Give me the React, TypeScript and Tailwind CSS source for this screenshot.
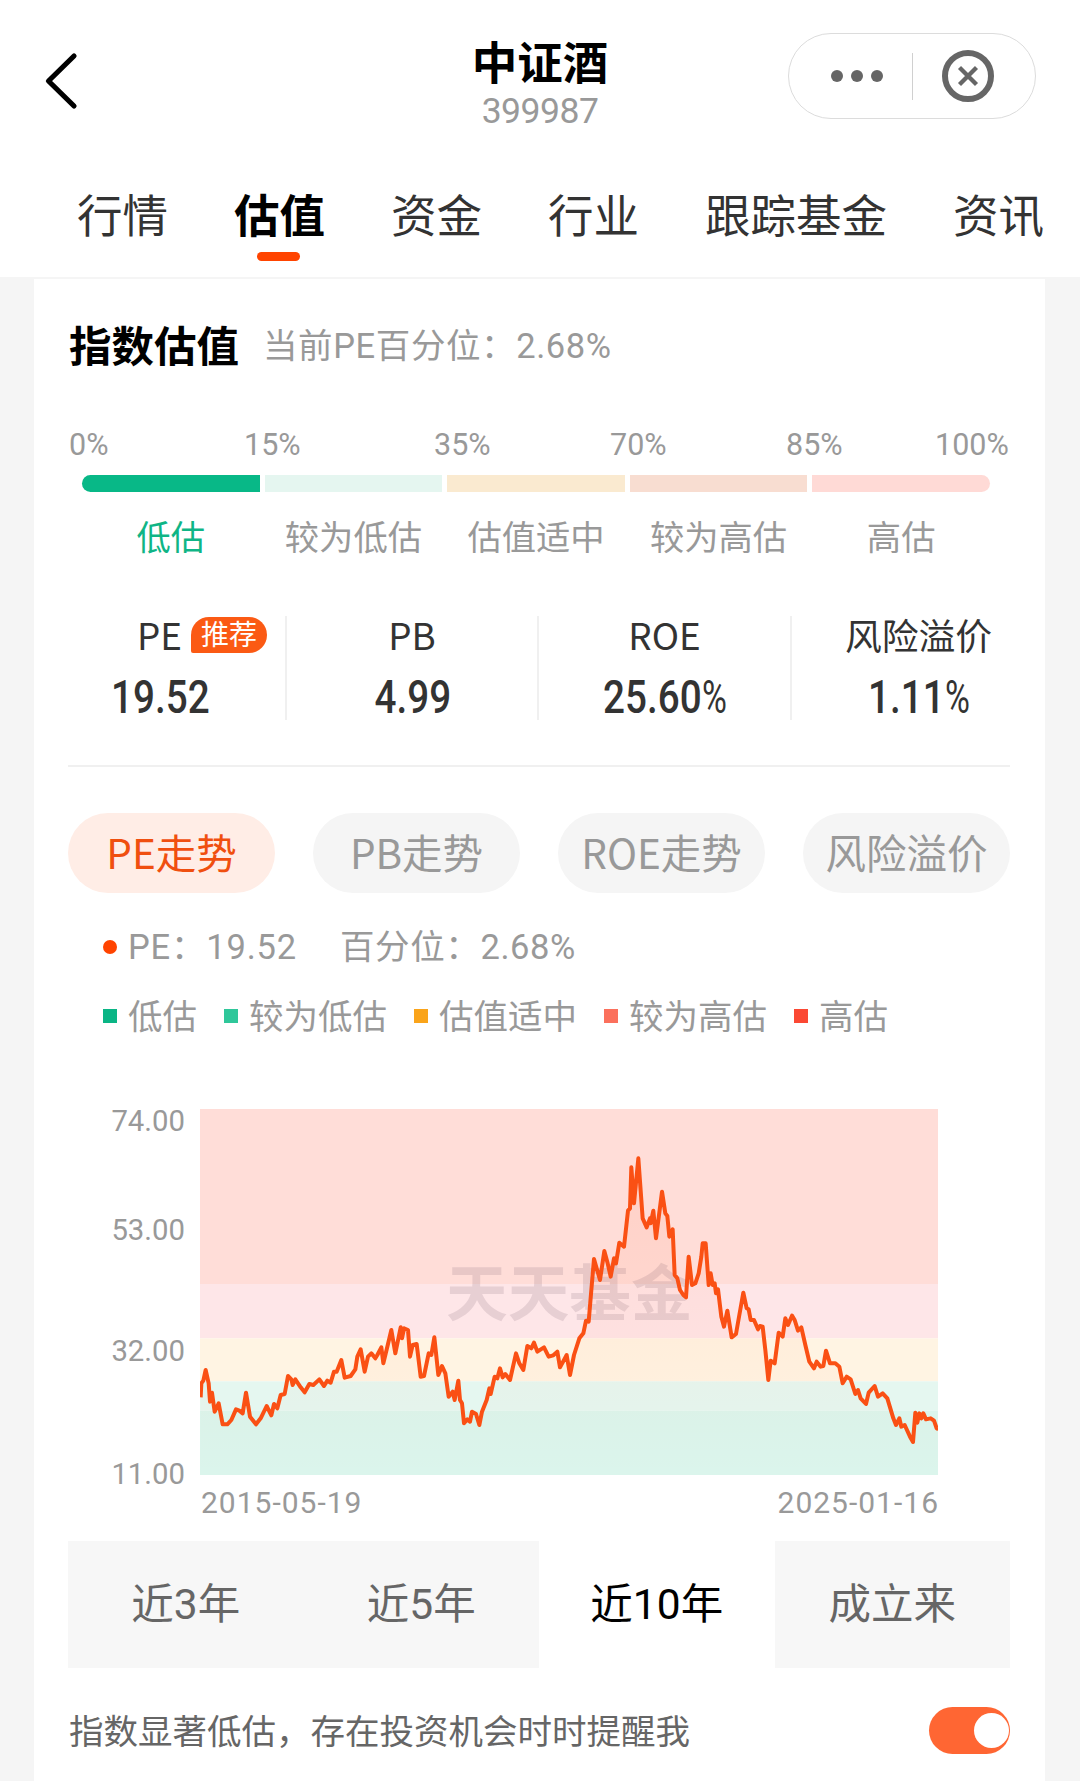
import React from "react";

const tabs = ["行情", "估值", "资金", "行业", "跟踪基金", "资讯"];

const levels = [
  { name: "低估", bar: "bg-[#08b887]", dot: "bg-[#0ab585]" },
  { name: "较为低估", bar: "bg-[#e5f6f0]", dot: "bg-[#2fc79a]" },
  { name: "估值适中", bar: "bg-[#faead0]", dot: "bg-[#faa41a]" },
  { name: "较为高估", bar: "bg-[#f8ddd1]", dot: "bg-[#fb705c]" },
  { name: "高估", bar: "bg-[#ffdad6]", dot: "bg-[#fb4833]" },
];

const metrics = [
  { name: "PE", value: "19.52", recommended: true },
  { name: "PB", value: "4.99" },
  { name: "ROE", value: "25.60", percent: true },
  { name: "风险溢价", value: "1.11", percent: true },
];

const trends = ["PE走势", "PB走势", "ROE走势", "风险溢价"];
const ranges = ["近3年", "近5年", "近10年", "成立来"];

const line =
  "332,922 334,880 340,872 347,840 356,880 360,935 366,908 374,965 386,940 398,1003 412,1003 424,990 438,958 448,962 458,970 468,908 480,980 498,1003 512,985 530,948 544,976 552,942 562,955 572,915 584,912 594,858 604,868 608,885 616,868 632,892 644,907 658,882 670,885 688,868 702,888 712,872 722,878 732,845 740,845 754,810 764,863 782,858 796,838 802,800 812,778 824,845 834,800 844,790 856,805 862,795 874,772 880,820 892,770 904,720 916,790 932,712 936,745 942,715 954,720 960,800 968,765 980,762 992,860 1002,858 1016,790 1024,795 1033,742 " +
  "1045,855 1056,828 1066,850 1076,920 1088,905 1094,930 1105,872 1110,930 1116,940 1122,1000 1132,988 1140,995 1146,965 1158,972 1168,1005 1176,965 1190,930 1198,895 1202,912 1214,860 1222,865 1230,835 1238,862 1246,852 1260,870 1278,790 1288,820 1300,840 1312,768 1324,775 1332,758 1342,785 1362,772 1376,800 1390,796 1402,785 1410,832 1430,795 1440,855 1452,795 1468,745 1480,730 1488,692 1496,695 1504,600 1512,507 1530,570 1543,483 1553,520 1562,560 1572,505 1578,520 1588,458 1602,470 1614,362 1620,355 1624,232 1632,340 1645,205 1658,385 1670,412 1680,385 1682,400 1690,362 1698,445 1716,305 1726,370 1732,378 1738,440 1748,418 1754,555 1762,565 1770,600 1780,615 1788,622 1796,500 1806,585 1816,580 1826,550 1834,500 1838,460 1847,460 " +
  "1856,585 1862,550 1868,585 1874,580 1878,610 1884,598 1894,680 1902,710 1912,662 1925,742 1938,732 1948,675 1960,608 1970,655 1976,658 1982,690 1992,690 2004,718 2010,708 2018,710 2026,780 2035,870 2042,812 2054,820 2066,728 2078,740 2086,685 2094,705 2106,677 2114,690 2124,722 2134,712 2146,765 2158,815 2172,835 2180,815 2192,830 2200,828 2208,782 2220,820 2236,820 2248,830 2258,880 2270,860 2282,868 2296,912 2304,900 2312,925 2328,942 2336,908 2354,888 2364,920 2378,910 2392,925 2410,985 2418,1005 2428,985 2434,1010 2444,1005 2460,1040 2469,1056 2476,968 2482,998 2488,970 2494,985 2500,970 2508,988 2522,985 2532,992 2540,1015 2545,1018";

function Header() {
  return (
    <header className="h-[277px]">
      <div className="grid h-[183px] grid-cols-[473px_134px_1fr]">
        <svg className="mt-[50px] ml-[42px] h-[62px] w-10" viewBox="0 0 40 62" fill="none">
          <path d="M32 6L6.500 31L32 56" stroke="#000" strokeWidth="5.2" strokeLinecap="round" strokeLinejoin="round" />
        </svg>
        <div className="flex flex-col items-center pt-[35px]">
          <h1 className="text-[45.500px] leading-[50px] font-bold whitespace-nowrap text-black">中证酒</h1>
          <div className="mt-[3px] font-['Roboto'] text-[35.500px] leading-[46px] tracking-[-0.5px] text-[#999]">399987</div>
        </div>
        <div className="mt-[33px] ml-[181px] flex h-[86px] w-[248px] items-center rounded-full border border-[#dcdcdc]">
          <div className="flex w-[123px] justify-center gap-[8px] pl-[12px]">
            <i className="size-3 rounded-full bg-[#666]" />
            <i className="size-3 rounded-full bg-[#666]" />
            <i className="size-3 rounded-full bg-[#666]" />
          </div>
          <div className="h-[47px] w-px bg-[#d0d0d0]" />
          <svg className="ml-[29px] size-[52px]" viewBox="0 0 52 52" fill="none" stroke="#666">
            <circle cx="26" cy="26" r="23" strokeWidth="6" />
            <path d="M17.500 17.500L34.500 34.500M34.500 17.500L17.500 34.500" strokeWidth="4.3" />
          </svg>
        </div>
      </div>
      <nav className="flex gap-[66px] pl-[77px]">
        {tabs.map((tab) => (
          <div key={tab} className="flex shrink-0 flex-col items-center">
            <span className={tab === "估值" ? "text-[45.500px] leading-[60px] font-bold text-black" : "text-[45.500px] leading-[60px] text-[#333]"}>
              {tab}
            </span>
            {tab === "估值" && <i className="mt-[9px] mr-[2px] h-[9px] w-[43px] rounded-full bg-[#ff4400]" />}
          </div>
        ))}
      </nav>
    </header>
  );
}

function Scale() {
  return (
    <div>
      <div className="mt-[52px] flex pl-px font-['Roboto'] text-[30.500px] leading-[40px] whitespace-nowrap text-[#999]">
        <span className="w-[175px]">0%</span>
        <span className="w-[190px]">15%</span>
        <span className="w-[176px]">35%</span>
        <span className="w-[176px]">70%</span>
        <span className="w-[149px]">85%</span>
        <span className="w-[74px]">100%</span>
      </div>
      <div className="mt-[10px] flex gap-[5px] pr-[20px] pl-[14px]">
        {levels.map((level, i) => (
          <div key={level.name} className="flex-1 text-center">
            <div className={`h-[17px] ${level.bar} ${i === 0 ? "rounded-l-full" : ""} ${i === 4 ? "rounded-r-full" : ""}`} />
            <div className={`mt-[23px] text-[34.300px] leading-[40px] ${i === 0 ? "text-[#0fb586]" : "text-[#999]"}`}>{level.name}</div>
          </div>
        ))}
      </div>
    </div>
  );
}

function Metrics() {
  return (
    <div className="-mr-[35px] -ml-[34px] mt-[61px] grid h-[103px] grid-cols-[253px_252px_253px_253px] text-center text-[#333]">
      {metrics.map((item, i) => (
        <div key={item.name} className={i < 3 ? "border-r-2 border-[#f0f0f0]" : ""}>
          <div className="relative h-[57px] text-[36.800px] leading-[36px]">
            {item.name}
            {item.recommended && (
              <span className="absolute top-px left-[157px] h-[36px] w-[76px] rounded-[18px] rounded-bl-[2px] bg-[#fb5a14] text-[28px] leading-[32px] text-white">
                推荐
              </span>
            )}
          </div>
          <div className="scale-x-[0.84] pt-px pl-[2px] font-['Roboto'] text-[46px] leading-[46px] font-medium">
            {item.value}
            {item.percent && <span className="inline-block w-[31px] origin-left scale-x-[0.88] font-normal">%</span>}
          </div>
        </div>
      ))}
    </div>
  );
}

function Chart() {
  return (
    <div className="mt-[75px] font-['Roboto']">
      <div className="flex">
        <div className="h-[366px] w-[132px] pr-[15px] text-right text-[29.300px] leading-[36px] text-[#999]">
          <div className="-mt-[6px]">74.00</div>
          <div className="mt-[73px]">53.00</div>
          <div className="mt-[85px]">32.00</div>
          <div className="mt-[87px]">11.00</div>
        </div>
        <svg className="block h-[366px] w-[738px]" viewBox="330 57 2214 1098">
          <defs>
            <linearGradient id="area" x1="0" y1="0" x2="0" y2="1">
              <stop offset="0" stopColor="#ff4400" stopOpacity="0.08" />
              <stop offset="1" stopColor="#ff4400" stopOpacity="0" />
            </linearGradient>
          </defs>
          <rect x="330" y="57" width="2214" height="525" fill="#ffddd8" />
          <rect x="330" y="582" width="2214" height="163" fill="#fee6e8" />
          <rect x="330" y="745" width="2214" height="129" fill="#fff4e3" />
          <rect x="330" y="874" width="2214" height="88" fill="#e5f7f0" />
          <rect x="330" y="962" width="2214" height="193" fill="#dbf5ec" />
          <text x="1068" y="678" className="font-['Noto_Sans_CJK_SC']" fontSize="185" fontWeight="700" fill="#8c7380" fillOpacity="0.2">
            天天基金
          </text>
          <polygon points={`330,1155 ${line} 2545,1155`} fill="url(#area)" />
          <polyline points={line} fill="none" stroke="#fa5014" strokeWidth="12" strokeLinejoin="round" />
        </svg>
      </div>
      <div className="mt-[10px] flex justify-between pr-[71px] pl-[133px] text-[30px] leading-[36px] tracking-[1px] text-[#999]">
        <span>2015-05-19</span>
        <span>2025-01-16</span>
      </div>
    </div>
  );
}

export default function App() {
  return (
    <div className="h-[1781px] w-[1080px] overflow-hidden bg-white font-['Noto_Sans_CJK_SC',sans-serif]">
      <Header />
      <div className="h-[1504px] bg-[#f5f5f5] pt-[2px] pr-[35px] pl-[34px]">
        <main className="h-full bg-white pt-[34px] pr-[35px] pl-[34px]">
          <div className="flex h-[60px] items-center">
            <h2 className="mt-[2px] ml-px text-[42.500px] leading-[60px] font-bold text-black">指数估值</h2>
            <span className="mt-[6px] ml-[24px] font-['Roboto','Noto_Sans_CJK_SC'] text-[34.500px] leading-[40px] tracking-[0.6px] text-[#999]">
              当前PE百分位：2.68%
            </span>
          </div>
          <Scale />
          <Metrics />
          <div className="mt-[46px] h-[2px] bg-[#f0f0f0]" />
          <div className="mt-[46px] flex gap-[38px]">
            {trends.map((name, i) => (
              <button
                key={name}
                className={`h-20 flex-1 rounded-full pb-1 text-[40.500px] leading-[75px] whitespace-nowrap ${i === 0 ? "bg-[#ffede6] text-[#f04f0f]" : "bg-[#f5f5f5] text-[#999]"}`}
              >
                {name}
              </button>
            ))}
          </div>
          <div className="mt-[34px] flex items-center pl-[35px] font-['Roboto','Noto_Sans_CJK_SC'] text-[34.500px] leading-[40px] text-[#999]">
            <i className="mr-[11px] size-[14px] rounded-full bg-[#ff4400]" />
            <span className="w-[212px] tracking-[0.8px]">PE：19.52</span>
            <span className="tracking-[0.6px]">百分位：2.68%</span>
          </div>
          <div className="mt-[27px] flex gap-[27px] pl-[35px] text-[34.500px] leading-[40px] text-[#999]">
            {levels.map((level) => (
              <div key={level.name} className="flex items-center">
                <i className={`mt-[3px] mr-[11px] size-[14px] ${level.dot}`} />
                {level.name}
              </div>
            ))}
          </div>
          <Chart />
          <div className="mt-[20px] grid h-[127px] grid-cols-4 text-center font-['Roboto','Noto_Sans_CJK_SC'] text-[42.500px] leading-[127px]">
            {ranges.map((name) => (
              <div key={name} className={name === "近10年" ? "text-black" : "bg-[#f7f7f7] text-[#666]"}>
                {name}
              </div>
            ))}
          </div>
          <div className="mt-[39px] flex h-[47px] items-center justify-between">
            <span className="mb-[3px] ml-px text-[34.500px] leading-[43px] text-[#666]">指数显著低估，存在投资机会时时提醒我</span>
            <div className="flex h-[47px] w-[81px] items-center justify-end rounded-full bg-[#ff6633] pr-px">
              <i className="size-[35px] rounded-full bg-white" />
            </div>
          </div>
        </main>
      </div>
    </div>
  );
}
